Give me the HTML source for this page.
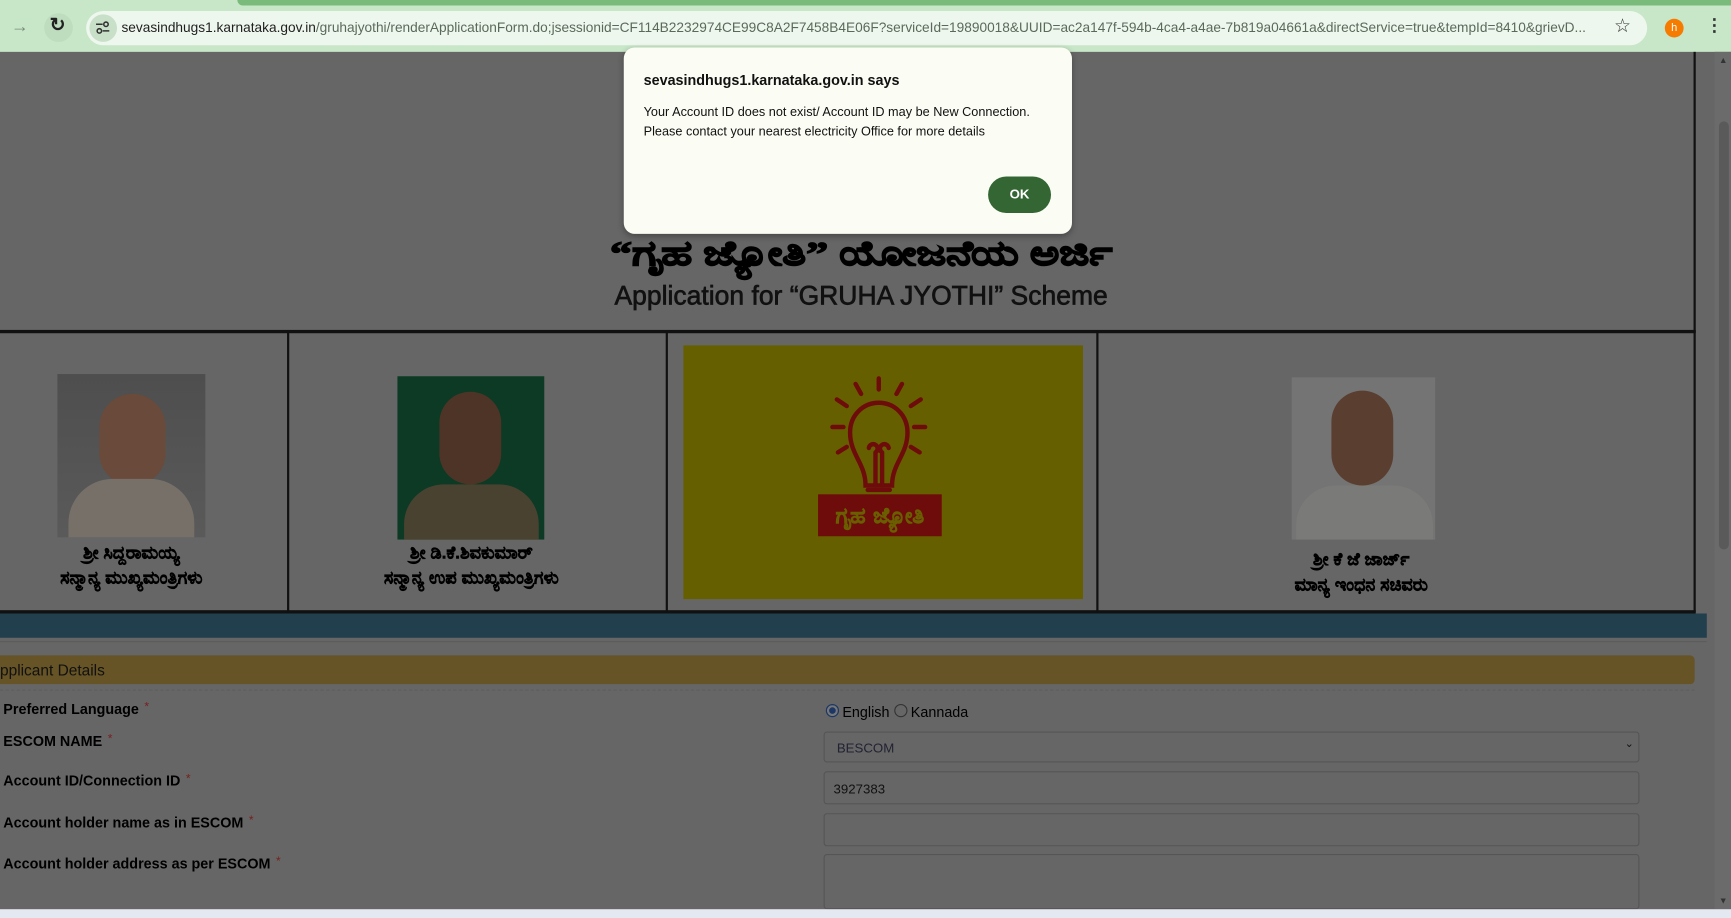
<!DOCTYPE html>
<html><head><meta charset="utf-8">
<style>
html,body{margin:0;padding:0;width:1731px;height:918px;overflow:hidden;background:#666;}
#w{position:absolute;left:0;top:0;width:1568px;height:832px;transform:scale(1.104,1.1034);transform-origin:0 0;font-family:"Liberation Sans",sans-serif;}
.a{position:absolute;}
.lbl{position:absolute;left:3px;font-size:13px;font-weight:bold;color:#000;}
.lbl i{color:#7a1e1e;font-style:normal;font-weight:normal;margin-left:5px;font-size:11px;vertical-align:top;}
.inp{position:absolute;left:746px;width:739px;border:1px solid #555;border-radius:3px;background:#666;box-sizing:border-box;}
.cap{position:absolute;text-align:center;font-size:16px;font-weight:bold;color:#000;line-height:23px;font-family:"Liberation Sans","DejaVu Sans",sans-serif;-webkit-text-stroke:0.4px #000;}
</style></head><body><div id="w">
<!-- browser bar -->
<div class="a" style="left:0;top:0;width:1568px;height:47px;background:#c8e6c8;"></div>
<div class="a" style="left:215px;top:0;width:1353px;height:5px;background:#7aba7a;border-radius:0 0 0 6px;"></div>
<div class="a" style="left:10px;top:16px;font-size:16px;color:#7a8a7a;">&#8594;</div>
<div class="a" style="left:40px;top:12px;width:26px;height:26px;border-radius:13px;background:#bedcbe;"></div>
<div class="a" style="left:45px;top:13px;font-size:17px;color:#222;font-weight:bold;">&#8635;</div>
<div class="a" style="left:78px;top:10px;width:1414px;height:31px;border-radius:16px;background:#eef7ee;"></div>
<div class="a" style="left:81px;top:13px;width:25px;height:25px;border-radius:13px;background:#c8e0c8;"></div>
<svg class="a" style="left:86px;top:18px" width="14" height="14" viewBox="0 0 14 14"><g stroke="#333" stroke-width="1.4" fill="none"><line x1="1" y1="4" x2="7" y2="4"/><circle cx="10" cy="4" r="2"/><line x1="7" y1="10" x2="13" y2="10"/><circle cx="4" cy="10" r="2"/></g></svg>
<div class="a" style="left:110px;top:18px;font-size:12.4px;color:#1f1f1f;white-space:nowrap;">sevasindhugs1.karnataka.gov.in<span style="color:#5a6a5a">/gruhajyothi/renderApplicationForm.do;jsessionid=CF114B2232974CE99C8A2F7458B4E06F?serviceId=19890018&amp;UUID=ac2a147f-594b-4ca4-a4ae-7b819a04661a&amp;directService=true&amp;tempId=8410&amp;grievD...</span></div>
<div class="a" style="left:1462px;top:14px;font-size:17px;color:#333;">&#9734;</div>
<div class="a" style="left:1508px;top:17px;width:17px;height:17px;border-radius:9px;background:#f57c00;color:#fff;font-size:10px;text-align:center;line-height:17px;">h</div>
<div class="a" style="left:1545px;top:13px;font-size:16px;color:#333;font-weight:bold;">&#8942;</div>
<!-- page -->
<div class="a" style="left:1534px;top:47px;width:2px;height:254px;background:#111;"></div>
<div class="a" style="left:0;top:299px;width:1536px;height:3px;background:#111;"></div>
<div class="a" style="left:0;top:553px;width:1536px;height:3px;background:#111;"></div>
<div class="a" style="left:260px;top:300px;width:2px;height:255px;background:#111;"></div>
<div class="a" style="left:603px;top:300px;width:2px;height:255px;background:#111;"></div>
<div class="a" style="left:993px;top:300px;width:2px;height:255px;background:#111;"></div>
<div class="a" style="left:1534px;top:300px;width:2px;height:255px;background:#111;"></div>
<div class="a" style="left:550px;top:212px;width:460px;text-align:center;font-size:31px;font-weight:bold;color:#000;white-space:nowrap;font-family:'Liberation Serif','DejaVu Sans',serif;transform:scaleX(1.3);-webkit-text-stroke:1.2px #000;">“ಗೃಹ ಜ್ಯೋತಿ” ಯೋಜನೆಯ ಅರ್ಜಿ</div>
<div class="a" style="left:530px;top:255px;width:500px;text-align:center;font-size:24px;color:#111;white-space:nowrap;-webkit-text-stroke:0.6px #111;">Application for “GRUHA JYOTHI” Scheme</div>
<!-- photos -->
<div class="a" style="left:52px;top:339px;width:134px;height:148px;background:linear-gradient(#4e4e4e,#5a5a5a);overflow:hidden;">
<div class="a" style="left:38px;top:18px;width:60px;height:82px;border-radius:30px 30px 28px 28px;background:#6a4a3a;"></div>
<div class="a" style="left:10px;top:95px;width:114px;height:70px;border-radius:40px 40px 0 0;background:#767068;"></div></div>
<div class="a" style="left:360px;top:341px;width:133px;height:148px;background:#0c3a24;overflow:hidden;">
<div class="a" style="left:38px;top:14px;width:56px;height:84px;border-radius:28px;background:#4e3426;"></div>
<div class="a" style="left:6px;top:98px;width:122px;height:60px;border-radius:36px 36px 0 0;background:#4a4230;"></div></div>
<div class="a" style="left:1170px;top:342px;width:130px;height:147px;background:#747474;overflow:hidden;">
<div class="a" style="left:36px;top:12px;width:56px;height:86px;border-radius:28px;background:#5a3e30;"></div>
<div class="a" style="left:4px;top:98px;width:124px;height:60px;border-radius:36px 36px 0 0;background:#7a7a78;"></div></div>
<div class="a" style="left:619px;top:313px;width:362px;height:230px;background:#665f00;"></div>
<svg class="a" style="left:740px;top:340px" width="114" height="150" viewBox="0 0 114 150"><g stroke="#6e0b0b" stroke-width="4" fill="none" stroke-linecap="round"><line x1="56" y1="3" x2="56" y2="13"/><line x1="35" y1="8" x2="40" y2="17"/><line x1="77" y1="8" x2="72" y2="17"/><line x1="18" y1="22" x2="27" y2="28"/><line x1="94" y1="22" x2="85" y2="28"/><line x1="14" y1="47" x2="24" y2="47"/><line x1="88" y1="47" x2="98" y2="47"/><line x1="19" y1="70" x2="27" y2="65"/><line x1="93" y1="70" x2="85" y2="65"/><path d="M44 100 C44 80 30 72 30 52 C30 36 42 25 56 25 C70 25 82 36 82 52 C82 72 68 80 68 100 Z"/><path d="M53 100 V70 M59 100 V70 M53 70 a4 4 0 1 0 -6 -4 M59 70 a4 4 0 1 1 6 -4"/><line x1="46" y1="104" x2="66" y2="104"/></g><rect x="1" y="108" width="112" height="38" fill="#6e0b0b"/><text x="57" y="134" text-anchor="middle" font-size="20" font-weight="bold" fill="#6a5e00" stroke="#6a5e00" stroke-width="0.6" font-family="DejaVu Sans,sans-serif">ಗೃಹ ಜ್ಯೋತಿ</text></svg>
<div class="cap" style="left:10px;top:490px;width:218px;">ಶ್ರೀ ಸಿದ್ದರಾಮಯ್ಯ<br>ಸನ್ಮಾನ್ಯ ಮುಖ್ಯಮಂತ್ರಿಗಳು</div>
<div class="cap" style="left:290px;top:490px;width:274px;">ಶ್ರೀ ಡಿ.ಕೆ.ಶಿವಕುಮಾರ್<br>ಸನ್ಮಾನ್ಯ ಉಪ ಮುಖ್ಯಮಂತ್ರಿಗಳು</div>
<div class="cap" style="left:1120px;top:496px;width:226px;">ಶ್ರೀ ಕೆ ಜೆ ಜಾರ್ಜ್<br>ಮಾನ್ಯ ಇಂಧನ ಸಚಿವರು</div>
<!-- band -->
<div class="a" style="left:0;top:556px;width:1546px;height:22px;background:#223f4e;"></div>
<div class="a" style="left:0;top:581px;width:1546px;height:1px;background:#5c5c5c;"></div>
<div class="a" style="left:-6px;top:594px;width:1541px;height:26px;background:#665426;border-radius:4px;"></div>
<div class="a" style="left:0;top:599px;font-size:14px;color:#111;">pplicant Details</div>
<div class="a" style="left:0;top:625px;width:1535px;border-top:1px dashed #5e5e5e;"></div>
<div class="lbl" style="top:635px;">Preferred Language<i>*</i></div>
<div class="lbl" style="top:664px;">ESCOM NAME<i>*</i></div>
<div class="lbl" style="top:700px;">Account ID/Connection ID<i>*</i></div>
<div class="lbl" style="top:738px;">Account holder name as in ESCOM<i>*</i></div>
<div class="lbl" style="top:775px;">Account holder address as per ESCOM<i>*</i></div>
<div class="a" style="left:748px;top:638px;width:10px;height:10px;border-radius:6px;border:1px solid #1c3766;background:#1c3766;box-shadow:inset 0 0 0 2px #777;"></div>
<div class="a" style="left:763px;top:638px;font-size:13px;color:#000;">English</div>
<div class="a" style="left:810px;top:638px;width:10px;height:10px;border-radius:6px;border:1px solid #333;"></div>
<div class="a" style="left:825px;top:638px;font-size:13px;color:#000;">Kannada</div>
<div class="inp" style="top:663px;height:28px;"><span class="a" style="left:11px;top:7px;font-size:12px;color:#223;">BESCOM</span><span class="a" style="right:4px;top:5px;font-size:10px;color:#111;">&#8964;</span></div>
<div class="inp" style="top:699px;height:30px;"><span class="a" style="left:8px;top:8px;font-size:12px;color:#111;">3927383</span></div>
<div class="inp" style="top:737px;height:30px;"></div>
<div class="inp" style="top:774px;height:50px;"></div>
<!-- scrollbar -->
<div class="a" style="left:1553px;top:47px;width:15px;height:777px;background:#6b6b6b;"></div>
<div class="a" style="left:1557px;top:110px;width:9px;height:388px;border-radius:5px;background:#5a5a5a;"></div>
<div class="a" style="left:1557px;top:50px;font-size:8px;color:#333;">&#9650;</div>
<div class="a" style="left:1557px;top:812px;font-size:8px;color:#333;">&#9660;</div>
<div class="a" style="left:0;top:824px;width:1568px;height:8px;background:#e4e8f0;"></div>
<!-- dialog -->
<div class="a" style="left:565px;top:43px;width:406px;height:169px;background:#fbfdf4;border-radius:10px;box-shadow:0 2px 6px rgba(0,0,0,.3);"></div>
<div class="a" style="left:583px;top:65px;font-size:13px;font-weight:bold;color:#111;white-space:nowrap;">sevasindhugs1.karnataka.gov.in says</div>
<div class="a" style="left:583px;top:93px;font-size:11.5px;color:#111;line-height:18px;white-space:nowrap;">Your Account ID does not exist/ Account ID may be New Connection.<br>Please contact your nearest electricity Office for more details</div>
<div class="a" style="left:895px;top:160px;width:57px;height:33px;border-radius:17px;background:#336633;color:#fff;font-size:12px;font-weight:bold;text-align:center;line-height:33px;">OK</div>
</div></body></html>
